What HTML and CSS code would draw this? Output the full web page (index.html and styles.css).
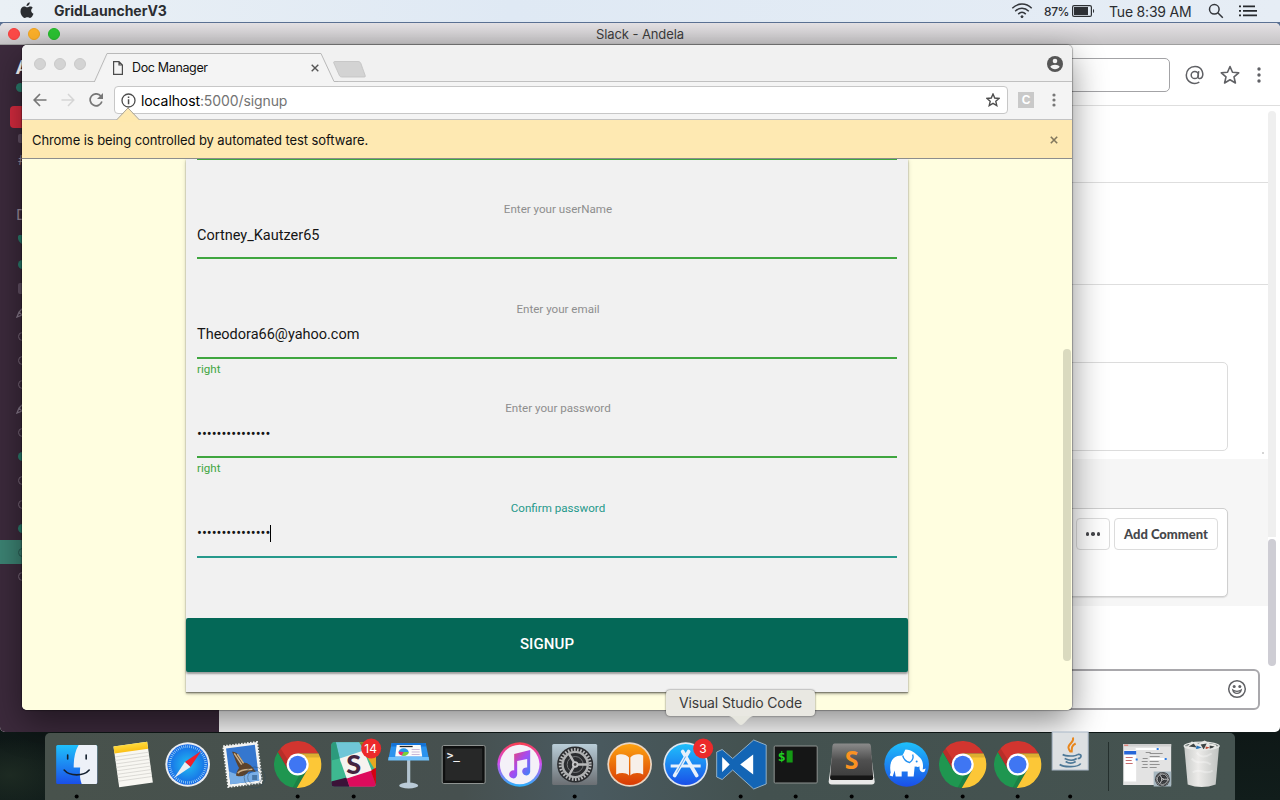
FILE: index.html
```html
<!DOCTYPE html>
<html lang="en">
<head>
<meta charset="utf-8">
<title>Doc Manager</title>
<link rel="stylesheet" href="styles.css">
</head>
<body>
<svg class="defs" width="0" height="0" aria-hidden="true">
  <defs>
    <linearGradient id="gBlue" x1="0" y1="0" x2="0" y2="1"><stop offset="0" stop-color="#1fc0fb"/><stop offset="1" stop-color="#1a4fe8"/></linearGradient>
    <linearGradient id="gOrange" x1="0" y1="0" x2="0" y2="1"><stop offset="0" stop-color="#fda311"/><stop offset="1" stop-color="#d83a05"/></linearGradient>
    <linearGradient id="gYellow" x1="0" y1="0" x2="0" y2="1"><stop offset="0" stop-color="#ffda3d"/><stop offset="1" stop-color="#fbc015"/></linearGradient>
    <linearGradient id="gRing" x1="0" y1="0" x2="0" y2="1"><stop offset="0" stop-color="#fb3e4c"/><stop offset=".45" stop-color="#d44df0"/><stop offset="1" stop-color="#28b3fb"/></linearGradient>
    <linearGradient id="gNote" x1="0" y1="0" x2="1" y2="1"><stop offset="0" stop-color="#fb4058"/><stop offset=".5" stop-color="#a44cf2"/><stop offset="1" stop-color="#2f8cf8"/></linearGradient>
    <linearGradient id="gSteel" x1="0" y1="0" x2="0" y2="1"><stop offset="0" stop-color="#b9cdd8"/><stop offset="1" stop-color="#6b6f73"/></linearGradient>
    <linearGradient id="gGrey" x1="0" y1="0" x2="0" y2="1"><stop offset="0" stop-color="#8b8b8b"/><stop offset=".45" stop-color="#505050"/><stop offset="1" stop-color="#3a3a3a"/></linearGradient>
    <linearGradient id="gTrash" x1="0" y1="0" x2="1" y2="0"><stop offset="0" stop-color="#c9cbc9"/><stop offset=".4" stop-color="#ecebe9"/><stop offset="1" stop-color="#bfc2c0"/></linearGradient>
    <radialGradient id="gCompass"><stop offset="0" stop-color="#22bdf0"/><stop offset="1" stop-color="#1668e6"/></radialGradient>
    <symbol id="chrome" viewBox="-24 -24 48 48">
      <path fill="#d2352f" d="M-19.9-12.5A23.5 23.5 0 0 1 20.8-11L0-11-9.5 5.5Z"/>
      <path fill="#1f9650" d="M-19.9-12.5-9.5 5.5 9.5 5.5-.9 23.5A23.5 23.5 0 0 1-19.9-12.5Z"/>
      <path fill="#fcc737" d="M20.8-11 0-11 9.5 5.5-.9 23.5A23.5 23.5 0 0 0 20.8-11Z"/>
      <path fill="#000" opacity=".12" d="M0-11H20.8L22-7 9-7ZM9.5 5.5-.9 23.5-5 23 3 8ZM-9.5 5.5-19.9-12.5-17-16-8-2Z"/>
      <circle r="11" fill="#fff"/><circle r="8.8" fill="#3f76f3"/>
    </symbol>
    <symbol id="gear" viewBox="-19 -19 38 38">
      <circle r="18" fill="#2b2d30"/>
      <circle r="15" fill="none" stroke="#b9babb" stroke-width="3" stroke-dasharray="1.6 1.54"/>
      <circle r="12.6" fill="none" stroke="#aeb0b1" stroke-width="2.4"/>
      <circle r="8" fill="none" stroke="#77797b" stroke-width="1"/>
      <path d="M0 0H12M0 0-6-10.4M0 0-6 10.4" stroke="#b9babb" stroke-width="2.4"/>
      <circle r="3.2" fill="#c6c7c8"/><circle r="1.4" fill="#444"/>
    </symbol>
    <symbol id="pencil" viewBox="0 0 12 12"><path d="M1 11 3 6 8 1 11 4 6 9ZM3 6 6 9" fill="none" stroke="#86788a" stroke-width="1.3"/></symbol>
  </defs>
</svg>

<div class="desktop">
  <header class="menubar">
    <svg class="apple" width="14" height="17" viewBox="0 0 14 17"><path fill="#2b2d31" d="M9.7.2c.1 1.200-.3 2.100-.9 2.800-.6.7-1.500 1.200-2.300 1.100-.1-1 .3-1.900.9-2.600C8 .8 8.900.3 9.700.2ZM12.700 5.800c-2.300 1.500-1.900 4.800.8 5.900-.6 1.600-1.900 4.200-3.500 4.200-1 0-1.400-.6-2.600-.6s-1.600.6-2.600.6C2.800 16 .5 12.600.5 9.300.5 6.300 2.300 4.500 4.300 4.500c1.200 0 2.100.8 2.900.8.800 0 1.800-.8 3.200-.8 1 0 1.800.5 2.300 1.300Z"/></svg>
    <b class="app-name">GridLauncherV3</b>
    <div class="status">
      <svg class="wifi" width="22" height="16" viewBox="0 0 22 16" fill="none" stroke="#33363b" stroke-width="1.500"><path d="M1.300 5.200C7-.3 15-.3 20.700 5.200M4.200 8.200c4-3.900 9.600-3.900 13.600 0M7.200 11.100c2.300-2.200 5.300-2.200 7.600 0"/><circle cx="11" cy="13.700" r="1" fill="#33363b" stroke-width="1"/></svg>
      <span class="percent">87%</span>
      <svg class="battery" width="23" height="12" viewBox="0 0 23 12"><rect x=".6" y=".6" width="18.800" height="10.800" rx="1.500" fill="none" stroke="#2d3034" stroke-width="1.200"/><rect x="2" y="2" width="14" height="8" fill="#2d3034"/><path d="M21 4c1.500.5 1.500 3.500 0 4Z" fill="#2d3034"/></svg>
      <span class="clock">Tue 8:39 AM</span>
      <svg class="search" width="16" height="16" viewBox="0 0 16 16" fill="none" stroke="#33363b" stroke-width="1.500"><circle cx="6.300" cy="6.300" r="4.800"/><path d="m9.800 9.800 5 5"/></svg>
      <svg class="list" width="18" height="12" viewBox="0 0 18 12" fill="#26292d"><path d="M0 .5h2v1.800H0zM4 .5h12v1.800H4zM0 5h2v1.800H0zM4 5h14v1.800H4zM0 9.500h2v1.800H0zM4 9.500h14v1.800H4z"/></svg>
    </div>
  </header>

  <section class="slack">
    <div class="slack-title"><span class="lights"><i class="red"></i><i class="amber"></i><i class="green"></i></span><span>Slack - Andela</span></div>
    <div class="slack-body">
      <aside class="sidebar">
        <div class="team">A</div>
        <div class="me"><i class="dot on"></i></div>
        <div class="alert"></div>
        <div class="row"><i class="lock"></i></div>
        <div class="row hash">#</div>
        <div class="group">D</div>
        <div class="row"><svg width="11" height="10" viewBox="0 0 11 10"><path fill="#2a7d6d" d="M5.500 10C1 7 0 5 0 3A2.700 2.700 0 0 1 5.500 2 2.700 2.700 0 0 1 11 3c0 2-1 4-5.500 7Z"/></svg></div>
        <div class="row"><i class="dot on"></i></div>
        <div class="row"><i class="box"></i></div>
        <div class="row pen"><svg width="12" height="12"><use href="#pencil"/></svg></div>
        <div class="row"><i class="dot"></i></div>
        <div class="row"><i class="dot"></i></div>
        <div class="row"><i class="dot"></i></div>
        <div class="row pen"><svg width="12" height="12"><use href="#pencil"/></svg></div>
        <div class="row"><i class="dot"></i></div>
        <div class="row"><i class="dot on"></i></div>
        <div class="row"><i class="dot"></i></div>
        <div class="row"><i class="dot"></i></div>
        <div class="row"><i class="dot on"></i></div>
        <div class="row current"><i class="dot"></i></div>
        <div class="row"><i class="dot"></i></div>
      </aside>
      <main class="channel">
        <div class="channel-head">
          <div class="search-box"></div>
          <svg width="20" height="20" viewBox="0 0 20 20" fill="none" stroke="#606165" stroke-width="1.500"><circle cx="9.800" cy="10" r="3.600"/><path d="M13.700 6.200 13 11.500c-.3 2.500 2.600 2.800 4 .8C18.600 9.800 18 1.400 10 1.400 4.800 1.400 1.300 5.300 1.300 10c0 7 7.500 10.500 13 7.200"/></svg>
          <svg width="20" height="20" viewBox="0 0 20 20" fill="none" stroke="#606165" stroke-width="1.600" stroke-linejoin="round"><path d="m10 1.500 2.500 5.700 6.200.6-4.700 4.100 1.400 6.100L10 14.800 4.600 18 6 11.900 1.300 7.800l6.200-.6Z"/></svg>
          <svg width="4" height="16" viewBox="0 0 4 16" fill="#606165"><circle cx="2" cy="2" r="1.700"/><circle cx="2" cy="8" r="1.700"/><circle cx="2" cy="14" r="1.700"/></svg>
        </div>
        <div class="feed">
          <div class="messages">
            <div class="msg m1"></div>
            <div class="msg m2"></div>
            <div class="msg m3"><div class="card"></div><i class="speck"></i></div>
            <div class="msg m4"><div class="card actions"><span class="btn more"><i></i><i></i><i></i></span><span class="btn">Add Comment</span></div></div>
          </div>
          <div class="track"><i class="rail"></i><i class="thumb"></i></div>
        </div>
        <div class="composer">
          <svg width="20" height="20" viewBox="0 0 20 20" fill="none" stroke="#606165" stroke-width="1.500"><circle cx="10" cy="10" r="8.300"/><path d="M5.800 11c1 4.400 7.400 4.400 8.400 0-2 1.700-6.400 1.700-8.400 0Z" stroke-width="1.200"/><g fill="#606165" stroke="none"><circle cx="7.200" cy="7.600" r="1.500"/><circle cx="12.800" cy="7.600" r="1.500"/></g></svg>
        </div>
      </main>
    </div>
  </section>

  <section class="browser">
    <div class="tabstrip">
      <span class="lights"><i></i><i></i><i></i></span>
      <div class="tab">
        <svg class="tab-shape" width="244" height="30" viewBox="0 0 244 30"><path d="M1 28.500C3 28 14.500 1 14.500.500H226c1.500 1 12.500 28 15.500 28V30H1Z" fill="#f4f4f4"/><path d="M-1 28.500H.5L13 .500H227L240 28.500h4" fill="none" stroke="#b9b9b9"/></svg>
        <svg class="page" width="10" height="14" viewBox="0 0 10 14" fill="none" stroke="#4b4b4b" stroke-width="1.200"><path d="M.6.600H6L9.400 4V13.400H.6ZM6 .600V4H9.400"/></svg>
        <span class="tab-title">Doc Manager</span>
        <svg class="close" width="8" height="8" viewBox="0 0 8 8" stroke="#555" stroke-width="1.400"><path d="m.7.700 6.600 6.600M7.300.700.7 7.300"/></svg>
      </div>
      <svg class="new-tab" width="33" height="17" viewBox="0 0 33 17"><path d="M2 .5H25c1.500 0 2.300.7 2.800 1.700l4.400 12.300c.3 1 0 1.500-1 1.500H9c-1.500 0-2.300-.7-2.700-1.700L.8 2C.4 1 .9.500 2 .5Z" fill="#d3d3d3" stroke="#c2c2c2" stroke-width=".8"/></svg>
      <svg class="avatar" width="16" height="16" viewBox="0 0 16 16"><circle cx="8" cy="8" r="8" fill="#565656"/><circle cx="8" cy="5" r="2.300" fill="#f2f2f2"/><path d="M3.300 10.800c1-2.700 8.400-2.700 9.400 0-1.900 3.300-7.500 3.300-9.400 0Z" fill="#f2f2f2"/></svg>
    </div>
    <div class="toolbar">
      <svg width="14" height="14" viewBox="0 0 14 14" fill="none" stroke="#777" stroke-width="1.700"><path d="M13.500 7H1.500M7 1 1.200 7 7 13"/></svg>
      <svg width="14" height="14" viewBox="0 0 14 14" fill="none" stroke="#d5d5d5" stroke-width="1.500"><path d="M.5 7h12M7 1l5.800 6L7 13"/></svg>
      <svg width="14" height="14" viewBox="0 0 14 14"><path d="M11.800 3A6 6 0 1 0 12.900 8.600" fill="none" stroke="#777" stroke-width="1.700"/><path d="M14 0V6H8Z" fill="#777"/></svg>
      <div class="omnibox">
        <svg width="15" height="15" viewBox="0 0 15 15"><circle cx="7.500" cy="7.500" r="6.500" fill="none" stroke="#4d4d4d" stroke-width="1.300"/><path d="M6.800 6.300h1.500v5H6.800zM6.800 3.600h1.500v1.500H6.800z" fill="#4d4d4d"/></svg>
        <span class="url">localhost<em>:5000/signup</em></span>
        <svg class="star" width="14" height="14" viewBox="0 0 20 20" fill="none" stroke="#4d4d4d" stroke-width="2"><path d="m10 1.500 2.500 5.700 6.200.6-4.700 4.100 1.400 6.100L10 14.800 4.600 18 6 11.900 1.300 7.800l6.200-.6Z"/></svg>
      </div>
      <span class="ext">C</span>
      <svg class="kebab" width="4" height="14" viewBox="0 0 4 14" fill="#777"><circle cx="2" cy="2" r="1.600"/><circle cx="2" cy="7" r="1.600"/><circle cx="2" cy="12" r="1.600"/></svg>
    </div>
    <div class="infobar">
      <svg class="pointer" width="24" height="15" viewBox="0 0 24 15"><path d="M1 13 12 1.500 23 13V15H1Z" fill="#fee9b0"/><path d="M1 12.500 12 1 23 12.500" fill="none" stroke="#a9a18c"/></svg>
      <span>Chrome is being controlled by automated test software.</span>
      <svg width="8" height="8" viewBox="0 0 8 8" stroke="#81775d" stroke-width="1.600"><path d="m.8.800 6.400 6.400M7.200.800.8 7.200"/></svg>
    </div>
    <div class="page-view">
      <form class="signup">
        <div class="field cut"><div class="value"></div><div class="hint"></div></div>
        <div class="field"><label>Enter your userName</label><div class="value">Cortney_Kautzer65</div><div class="hint"></div></div>
        <div class="field tall"><label>Enter your email</label><div class="value">Theodora66@yahoo.com</div><div class="hint">right</div></div>
        <div class="field"><label>Enter your password</label><div class="value">•••••••••••••••</div><div class="hint">right</div></div>
        <div class="field tall focus"><label>Confirm password</label><div class="value">•••••••••••••••<i class="caret"></i></div><div class="hint"></div></div>
        <div class="submit">SIGNUP</div>
      </form>
      <i class="page-thumb"></i>
    </div>
  </section>

  <nav class="dock">
    <svg class="run" viewBox="-27.500 -31.500 55 67"><rect x="-20.500" y="-19.500" width="41" height="39" rx="1.500" fill="url(#gBlue)"/><path d="M2-19.500H19a1.500 1.500 0 0 1 1.500 1.500V18a1.500 1.500 0 0 1-1.500 1.500H5C3 14 3 9 3.500 3H-3C-3-5-2-13 2-19.500Z" fill="#edf1f8"/><path d="M-12.500 5.500C-7 12 7 12 12.500 5.500M-9-9.500v4M9.500-9.500v4" fill="none" stroke="#14202e" stroke-width="1.600" stroke-linecap="round"/><circle cy="32" r="2"/></svg>
    <svg viewBox="-27.500 -31.500 55 67"><g transform="translate(1.500 0) rotate(-8)"><rect x="-17" y="-20.500" width="34" height="41" fill="#f8f7f2"/><rect x="-17" y="-20.500" width="34" height="7" fill="url(#gYellow)"/><path d="M-17-10h34M-17-6.500h34M-17-3h34M-17 .5h34M-17 4h34M-17 7.500h34M-17 11h34M-17 14.500h34" stroke="#d6d5d0" stroke-width=".8"/></g></svg>
    <svg viewBox="-27.500 -31.500 55 67"><circle r="22.300" fill="#e9ecf0"/><circle r="20.300" fill="url(#gCompass)"/><circle r="18" fill="none" stroke="#a9dcf8" stroke-width="2.600" stroke-dasharray=".7 1.300"/><path d="M13.500-13.500 2.800 2.500-2.800-2.500Z" fill="#f01f2c"/><path d="M-13.500 13.500 2.800 2.500-2.800-2.500Z" fill="#eceef0"/></svg>
    <svg viewBox="-27.500 -31.500 55 67"><g transform="rotate(-7)"><rect x="-17" y="-20.500" width="34" height="41" fill="#f4f4f2" stroke="#f4f4f2" stroke-width="2" stroke-dasharray="1.500 1.500"/><rect x="-14.500" y="-18" width="29" height="36" fill="#3577cf"/><path d="M-14.500 5C-4 12 6 10 14.500 8V18H-14.500Z" fill="#79aee6"/><path d="M-9-14C-4-14-1-8 1-2 6-1 10 3 12 9 9 8 7 7 5 8 2 11-3 13-8 10-7 7-6 5-4 3-6-1-7-8-9-14Z" fill="#5d432c"/><path d="M-7-12-1 0M-4-11 1-1M-6 8C-2 4 5 6 9 6" fill="none" stroke="#cbb08a" stroke-width="1.500"/></g><g fill="none" stroke="#2f4a5c" opacity=".45"><circle cx="12" cy="13" r="10.500"/><circle cx="12" cy="13" r="7"/></g><rect x="9.500" y="10.500" width="5" height="5" fill="#27527f" opacity=".6"/></svg>
    <svg viewBox="-27.500 -31.500 55 67"><use href="#chrome" x="-24" y="-24" width="48" height="48"/><circle cy="32" r="2"/></svg>
    <svg viewBox="-27.500 -31.500 55 67"><clipPath id="sq"><rect x="-22.300" y="-22.300" width="44.600" height="44.600" rx="3"/></clipPath><g clip-path="url(#sq)"><rect x="-23" y="-23" width="46" height="46" fill="#3eb890"/><path d="M-18-23H7L12-10-13-2Z" fill="#70c6d7"/><path d="M7-23H23V8L12-10Z" fill="#e8a820"/><path d="M5-23H23L12-12Z" fill="#75862a"/><path d="M-23-23H-18L-14-6-23-4Z" fill="#2c9a7c"/><path d="M-23 17-7 13-4 23H-23Z" fill="#3b1238"/><path d="M-7 14 17 5 23 23H-4Z" fill="#dd0b5c"/><path d="M17 6 23 3V23Z" fill="#d40010"/><path d="M-14-6 10-14 18 6-7 14Z" fill="#f6f3f0"/></g><text class="slack-s" x="0" y="9.500">S</text><circle class="badge" cx="17.500" cy="-16" r="10"/><text class="count" x="17" y="-11.700">14</text><circle cy="32" r="2"/></svg>
    <svg viewBox="-27.500 -31.500 55 67"><rect x="-1.600" y="-5" width="3.200" height="26" fill="#b3c4d0"/><ellipse cy="21" rx="9.500" ry="3" fill="#bacbd8"/><path d="M-17-21.500H17L20.500-4.500H-20.500Z" fill="#2a93ee"/><path d="M-17-21.500H17L17.500-18H-17.500Z" fill="#1473d6"/><path d="M-20-7.500H20L20.500-4H-20.500Z" fill="#6fc0fa"/><path d="M-12-19.500H12L13.500-8H-13.500Z" fill="#fafafa"/><path d="M-9-18H4" stroke="#222" stroke-width="1.300"/><ellipse cx="-5" cy="-12.500" rx="5" ry="3.700" fill="#2496e6"/><path d="M-5-12.500H0A5 3.700 0 0 1-7-9Z" fill="#7bd03a"/><path d="M-5-12.500-7-9A5 3.700 0 0 1-10-13Z" fill="#ee2a6f"/><path d="M3-15H11M3-12.500H11M3-10H11" stroke="#c8b9d8"/></svg>
    <svg viewBox="-27.500 -31.500 55 67"><rect x="-21.500" y="-19" width="43" height="38" rx="1.500" fill="#0f1010" stroke="#8f9492"/><rect x="-18.500" y="-16" width="37" height="32" fill="#272828"/><text class="prompt" x="-17" y="-6">&gt;_</text></svg>
    <svg viewBox="-27.500 -31.500 55 67"><circle r="22.300" fill="url(#gRing)"/><circle r="19.800" fill="#f4f1f8"/><path d="M-5.500-10.500 10.500-14.500V7.500A4 4 0 1 1 7.500 3V-5.500L-2.500-3.500V10A4 4 0 1 1-5.500 6Z" fill="url(#gNote)"/></svg>
    <svg viewBox="-27.500 -31.500 55 67"><rect x="-22.500" y="-20.500" width="45" height="41" rx="1.500" fill="url(#gSteel)"/><use href="#gear" x="-18.500" y="-19" width="38" height="38"/><circle cy="32" r="2"/></svg>
    <svg viewBox="-27.500 -31.500 55 67"><circle r="22.300" fill="#e9d5c2"/><circle r="20.600" fill="url(#gOrange)"/><path d="M-.7-7C-4-11-10-11-13.500-9V10C-9 8-4 8-.7 11ZM.7-7C4-11 10-11 13.500-9V10C9 8 4 8 .7 11Z" fill="#f7efe9"/></svg>
    <svg viewBox="-27.500 -31.500 55 67"><circle r="22.300" fill="#dfe6ef"/><circle r="20.600" fill="url(#gBlue)"/><path d="M-3-13 11 11M3-13-11 11" stroke="#e8f1fb" stroke-width="3.600" stroke-linecap="round"/><path d="M-15 1.500H15" stroke="#e8f1fb" stroke-width="3"/><path d="M0-8-9 8" stroke="#5aa4ee" stroke-width=".9"/><circle class="badge" cx="17.500" cy="-16" r="10"/><text class="count" x="17.300" y="-11.700">3</text></svg>
    <svg viewBox="-27.500 -31.500 55 67"><path d="M13-24.500 25.500-19.500V19.500L13 24.500-8 5.500-18.500 15-24 12.500V-12.500L-18.500-15-8-6Z" fill="#1365b5" stroke="#9db9cc" stroke-width=".9"/><path d="M-18.500-7.500-11 0-18.500 7.500ZM12.500-10V10L-.5 0Z" fill="#fff"/><circle cy="32" r="2"/></svg>
    <svg viewBox="-27.500 -31.500 55 67"><rect x="-21.500" y="-18.500" width="43" height="37" rx="1" fill="#151616" stroke="#8f9492"/><text class="prompt shell" x="-18" y="-3.500">$</text><rect x="-9" y="-14" width="6" height="12" fill="#149a14"/><circle cy="32" r="2"/></svg>
    <svg viewBox="-27.500 -31.500 55 67"><path d="M-18-20H18L23 17Q23 20 20 20H-20Q-23 20-23 17Z" fill="#e9e9e8"/><path d="M-17-21H17Q19-21 19.300-18L21.500 13Q21.500 15.500 19 15.500H-19Q-21.500 15.500-21.500 13L-19.300-18Q-19-21-17-21Z" fill="url(#gGrey)"/><path d="M-21 11H21L21.500 13Q21.500 15.500 19 15.500H-19Q-21.500 15.500-21.500 13Z" fill="#161616"/><text class="sublime" x="0" y="4.500">S</text><circle cy="32" r="2"/></svg>
    <svg viewBox="-27.500 -31.500 55 67"><circle r="22.300" fill="url(#gBlue)"/><path d="M-16 8C-18-2-14-9-5-9 -3-9-2-15-1-15 5-15 9-11 12-8 16-5 17 0 16 5L19 4 18 7C15 9 12 6 13 2 11 3 9 2 8 2L7 12H1V7L-5 7V12H-11L-12 6-14 12-17 11Z" fill="#fff"/><path d="M-4-9C-3-5-1-3 3-2 6-4 7-7 6-10" fill="none" stroke="#2090f2" stroke-width="1.300"/><circle cx="10" cy="-3" r="1" fill="#2090f2"/><circle cy="32" r="2"/></svg>
    <svg viewBox="-27.500 -31.500 55 67"><use href="#chrome" x="-24" y="-24" width="48" height="48"/><circle cy="32" r="2"/></svg>
    <svg viewBox="-27.500 -31.500 55 67"><use href="#chrome" x="-24" y="-24" width="48" height="48"/><circle cy="32" r="2"/></svg>
    <svg viewBox="-27.500 -31.500 55 67"><rect x="-20.500" y="-32.500" width="36" height="38" fill="#dde0e2" stroke="#a9b7c7"/><path d="M0-27C3-23-6-20-4-16-3-13-2-13-2-12M3-21C-1-19-1-17-1-12" fill="none" stroke="#e8861c" stroke-width="2"/><path d="M-10-10C-7-8 3-8 5-10M-8-6C-4-4 1-4 4-6M-7-3C-4-1 0-1 3-3M5-10C10-11 9-6 5-6M-13 0C-9 3 6 3 8-1" fill="none" stroke="#4d7897" stroke-width="1.600"/><circle cx="-2.500" cy="32" r="2"/></svg>
    <i class="sep"></i>
    <svg class="mini" viewBox="-27.500 -31.500 55 67"><rect x="-23.500" y="-20.500" width="48" height="41" fill="#e3e3e3"/><rect x="-23.500" y="-20.500" width="48" height="2.500" fill="#cfcfcf"/><path d="M-22.500-19.300h4" stroke="#e9685b"/><rect x="-11" y="-16.500" width="24" height="2" fill="#fff"/><rect x="-22.500" y="-14" width="12" height="31" fill="#fff"/><rect x="-22.500" y="-13.500" width="12" height="3.500" fill="#2767d8"/><path d="M-21-7H-14M-21-4H-15M-21-1H-14" stroke="#c66d6d"/><path d="M-1-12H4M-4-6H1M-5-3H1M-4 0H1M-5 3H1M3-11H16M3-8H13M3-3H12M3 0H13M3 3H10" stroke="#929292"/><path d="M3-5.500H18" stroke="#fff" stroke-width="2"/><path d="M-11-6h2v2h-2zM18-6.500h2v2h-2zM10-16.500h2v2h-2z" fill="#2c7be5"/><rect x="7" y="7" width="17.500" height="15" fill="#a7b7c0"/><use href="#gear" x="8" y="7" width="15.500" height="15.500"/></svg>
    <svg viewBox="-27.500 -31.500 55 67"><path d="M-17.500-19H17.500L14 20Q0 25-14 20Z" fill="url(#gTrash)"/><path d="M-15-17-10-23-3-21 3-24 8-21 14-20 15-17C8-13-8-13-15-17Z" fill="#e9e9e6"/><path d="M-13-18-8-21-5-17ZM-1-20 5-21 2-15ZM8-19 13-18 8-15Z" fill="#3e4545"/><path d="M-5-19 0-17-6-15Z" fill="#2a74b8"/><path d="M4-18 8-17 4-15Z" fill="#bd4a35"/><ellipse cy="-18.500" rx="17.500" ry="3.800" fill="none" stroke="#e6e8e6" stroke-width="1.200"/><path d="M-10-6C-3 2 2-6 9 0M-9 8C-2 2 4 12 11 6M-5-12C0-5 7-9 10-11" fill="none" stroke="#fff" stroke-width="2" opacity=".3"/></svg>
  </nav>
  <div class="tooltip">Visual Studio Code<svg width="24" height="12" viewBox="0 0 24 12"><path d="M0 0H24C19 1 15 9 12 9S5 1 0 0Z" fill="#e6e6de"/></svg></div>
</div>
</body>
</html>
```
FILE: styles.css
```css
* { box-sizing: border-box; }
body { margin: 0; font-family: Inter, "Liberation Sans", sans-serif; }
svg { display: block; flex: none; }
.defs { position: absolute; }
i, em { font-style: normal; }

.desktop {
  position: relative;
  width: 1280px;
  height: 800px;
  overflow: hidden;
  background:
    radial-gradient(ellipse at 10px 775px, #1d2a22, transparent 60px),
    linear-gradient(#5b7193 0, #5b7193 40px, #0b1110 60px, #0e1716 720px, #111d1b);
}

/* menu bar */
.menubar {
  display: flex;
  align-items: center;
  height: 22px;
  padding: 0 23px 0 20px;
  background: linear-gradient(90deg, #eaf0f5, #dfe9f4 40%, #e6edf5);
  color: #2b2d31;
}
.apple { margin-top: -2px; }
.app-name { margin: -1px 0 0 20px; font-size: 14px; letter-spacing: 0; }
.status { display: flex; align-items: center; margin-left: auto; }
.percent { width: 28px; margin-left: 11px; font-size: 12px; font-weight: 500; letter-spacing: -.4px; white-space: nowrap; }
.clock { width: 99px; margin-left: 14px; font-size: 14px; letter-spacing: -.2px; white-space: nowrap; }
.list { margin-left: 15px; }

/* chat window */
.slack {
  position: absolute;
  left: 0;
  top: 23px;
  width: 1280px;
  height: 709px;
  border-radius: 5px;
  overflow: hidden;
  background: #fff;
}
.slack-title {
  position: relative;
  display: flex;
  align-items: center;
  justify-content: center;
  height: 22px;
  border-bottom: 1px solid #9f9f9f;
  background: linear-gradient(#e4e1e4, #c6c4c6);
  color: #3c3c3c;
  font-size: 13px;
  letter-spacing: -.1px;
}
.lights { display: flex; gap: 8px; }
.lights i { width: 12px; height: 12px; border-radius: 50%; background: #d3d3d3; border: 1px solid #c9c9c9; }
.slack-title .lights { position: absolute; left: 8px; top: 5px; }
.lights .red { background: #fc4a48; border-color: #f23d3c; }
.lights .amber { background: #fcb02a; border-color: #eea21f; }
.lights .green { background: #2bc232; border-color: #20b527; }

.slack-body { display: flex; height: 687px; }
.sidebar { width: 219px; padding-top: 10px; background: #3c2a3c; color: #9b8c9b; }
.team { height: 24px; padding-left: 16px; color: #fff; font: 900 19px/24px Lato, sans-serif; }
.me { display: flex; align-items: center; height: 17px; padding-left: 16px; }
.alert { height: 22px; width: 190px; margin: 10px 0 0 10px; border-radius: 4px; background: #d72b3f; }
.row { display: flex; align-items: center; height: 24px; padding-left: 18px; font-size: 13px; }
.alert + .row { height: 20px; }
.row.pen { padding-left: 16px; }
.row.current { background: #3c8373; }
.group { height: 56px; padding: 30px 0 2px 16px; font: 15px/24px Lato, sans-serif; }
.dot { width: 9px; height: 9px; border: 1.500px solid #79697a; border-radius: 50%; }
.dot.on { border: 0; background: #2a7d6d; }
.current .dot { border-color: #2a5b53; }
.lock, .box { width: 10px; height: 9px; border-radius: 2px; background: #625164; }
.box { height: 11px; }

.channel { flex: 1; display: flex; flex-direction: column; }
.channel-head {
  display: flex;
  align-items: center;
  height: 61px;
  padding-right: 19px;
  border-bottom: 1px solid #dedede;
}
.channel-head svg { margin-left: 15px; }
.search-box { width: 250px; height: 34px; margin-left: auto; border: 1px solid #a3a3a6; border-radius: 5px; }
.channel-head .search-box + svg { margin-left: 15px; }
.channel-head svg:last-child { margin-left: 17px; }
.feed { display: flex; height: 563px; }
.messages { flex: 1; }
.msg { position: relative; padding-right: 40px; }
.m1 { height: 77px; border-bottom: 1px solid #dedede; }
.m2 { height: 102px; border-bottom: 1px solid #dedede; }
.m3 { height: 174px; padding-top: 77px; }
.m4 { height: 147px; padding-top: 49px; background: #f6f6f6; }
.card { height: 89px; border: 1px solid #dcdcdc; border-radius: 5px; background: #fff; }
.speck { position: absolute; right: 4px; bottom: 5px; width: 2px; height: 2px; background: #d5d5d5; }
.actions { display: flex; justify-content: flex-end; gap: 4px; padding: 9px 9px 0; border-color: #cfcfcf; box-shadow: 0 1px 1px #ddd; }
.btn {
  display: flex;
  align-items: center;
  justify-content: center;
  width: 104px;
  height: 32px;
  border: 1px solid #dcdcdc;
  border-radius: 4px;
  color: #46474b;
  font: 900 13px Lato, sans-serif;
}
.more { width: 34px; gap: 2px; }
.more i { width: 3.500px; height: 3.500px; border-radius: 50%; background: #46474b; }
.track { display: flex; flex-direction: column; width: 12px; padding-top: 5px; }
.rail { width: 8px; height: 426px; border-radius: 4px 4px 0 0; background: #efefef; }
.thumb { width: 8px; height: 127px; margin-top: 2px; border-radius: 4px; background: #cecdd4; }
.composer {
  display: flex;
  align-items: center;
  justify-content: flex-end;
  height: 41px;
  margin: 0 20px 0 20px;
  padding: 0 11px 2px 0;
  border: 2px solid #a9a8ac;
  border-radius: 6px;
}

/* browser window */
.browser {
  position: absolute;
  left: 22px;
  top: 45px;
  width: 1050px;
  height: 665px;
  border-radius: 5px;
  background: #f4f4f4;
  box-shadow: 0 0 1px 1px rgba(0,0,0,.28), 0 13px 34px rgba(0,0,0,.45);
}
.tabstrip {
  display: flex;
  height: 37px;
  padding: 0 9px 0 12px;
  border-bottom: 1px solid #c0c0c0;
  border-radius: 5px 5px 0 0;
  background: #f1f1f1;
}
.tabstrip .lights { margin-top: 13px; }
.tab { position: relative; display: flex; align-items: center; width: 242px; height: 30px; margin: 8px 0 0 8px; padding-left: 19px; }
.tab-shape { position: absolute; left: 0; top: 0; }
.page, .tab-title, .close { position: relative; }
.tab-title { margin: -2px 0 0 9px; color: #111; font-size: 12.500px; letter-spacing: -.35px; }
.close { margin-left: auto; margin-right: 17px; }
.new-tab { margin: 16px 0 0 -3px; }
.avatar { margin: 11px 0 0 auto; }
.toolbar {
  display: flex;
  align-items: center;
  gap: 14px;
  height: 37px;
  padding: 0 16px 1px 11px;
  background: #f4f4f4;
}
.omnibox {
  display: flex;
  align-items: center;
  flex: 1;
  height: 28px;
  margin-left: -3px;
  padding: 0 7px 0 6px;
  border: 1px solid #c7c7c7;
  border-radius: 4px;
  background: #fff;
}
.url { margin-left: 5px; color: #000; font-size: 14px; letter-spacing: -.1px; }
.url em { color: #737373; }
.star { margin-left: auto; }
.ext { width: 16px; height: 16px; margin-left: -4px; background: #c9c9c9; color: #fff; font: bold 12px/16px "Liberation Sans", sans-serif; text-align: center; }
.kebab { margin-left: 4px; }
.infobar {
  position: relative;
  display: flex;
  align-items: center;
  justify-content: space-between;
  height: 40px;
  padding: 2px 14px 0 10px;
  border-top: 1px solid #c3c3c3;
  border-bottom: 1px solid #8d8d8d;
  background: #fee9b2;
  color: #111;
  font-size: 13px;
  letter-spacing: -.08px;
}
.infobar span { margin-top: -1px; }
.pointer { position: absolute; left: 94px; top: -13px; }
.page-view {
  position: relative;
  display: flex;
  justify-content: center;
  height: 551px;
  border-radius: 0 0 5px 5px;
  overflow: hidden;
  background: #fffee0;
}
.signup {
  width: 722px;
  height: 533px;
  background: #f1f1f1;
  box-shadow: 0 2px 2px rgba(0,0,0,.22), 0 1px 5px rgba(0,0,0,.14), 0 1px 1px rgba(0,0,0,.3);
  font-family: Roboto, sans-serif;
}
.field { display: flex; flex-direction: column; justify-content: flex-end; height: 99px; padding: 0 11px; }
.field.tall { height: 100px; }
.field.cut { height: 21px; }
.field label { padding-left: 22px; color: #8e8e8e; font-size: 11.600px; line-height: 16px; text-align: center; }
.value { display: flex; align-items: center; height: 42px; padding-bottom: 4px; border-bottom: 2px solid #3fa63f; color: #151515; font-size: 14.500px; }
.tall .value { padding-bottom: 6px; }
.field.cut .value { height: 1px; padding: 0; border-width: 1px; }
.hint { height: 20px; color: #3fa63f; font-size: 11.600px; line-height: 20px; }
.focus label { color: #26998b; }
.focus .value { border-color: #26998b; }
.caret { width: 1px; height: 17px; background: #000; }
.submit {
  height: 54px;
  margin-top: 40px;
  border-radius: 2px;
  background: #046857;
  box-shadow: 0 2px 2px rgba(0,0,0,.35);
  color: #fff;
  font-size: 15px;
  font-weight: 500;
  line-height: 53px;
  letter-spacing: .1px;
  text-align: center;
}
.page-thumb { position: absolute; right: 1px; top: 190px; width: 8px; height: 312px; border-radius: 4px; background: #dadabf; }

/* dock */
.dock {
  position: absolute;
  left: 45px;
  top: 733px;
  display: flex;
  width: 1190px;
  height: 67px;
  padding-left: 4px;
  border-radius: 5px 5px 0 0;
  background: linear-gradient(90deg, #48524c, #46504f 35%, #4a5a60 45%, #43514f 60%, #455350);
}
.dock svg { width: 55.350px; height: 67px; overflow: visible; }
.sep { width: 1px; height: 49px; margin: 9px 11px 0 7.300px; background: #242f2d; }
.mini { margin-left: -1px; }
.badge { fill: #ec2a2b; }
.count { fill: #fff; font: 12px Inter, sans-serif; text-anchor: middle; }
.slack-s { fill: #442440; font: 900 27px Lato, sans-serif; text-anchor: middle; }
.prompt { fill: #f2f2f2; font: bold 11px "DejaVu Sans Mono", monospace; }
.shell { fill: #20d420; font-size: 13px; }
.sublime { fill: #fb9222; font: bold 25px "Open Sans", sans-serif; text-anchor: middle; }
.tooltip {
  position: absolute;
  left: 666px;
  top: 690px;
  width: 149px;
  height: 26px;
  border-radius: 4px;
  background: #e9e8e2;
  box-shadow: 0 0 2px rgba(0,0,0,.65);
  color: #3b3b3b;
  font-size: 14px;
  line-height: 26px;
  letter-spacing: -.12px;
  text-align: center;
  white-space: nowrap;
}
.tooltip svg { position: absolute; left: 63px; top: 25.500px; }
```
